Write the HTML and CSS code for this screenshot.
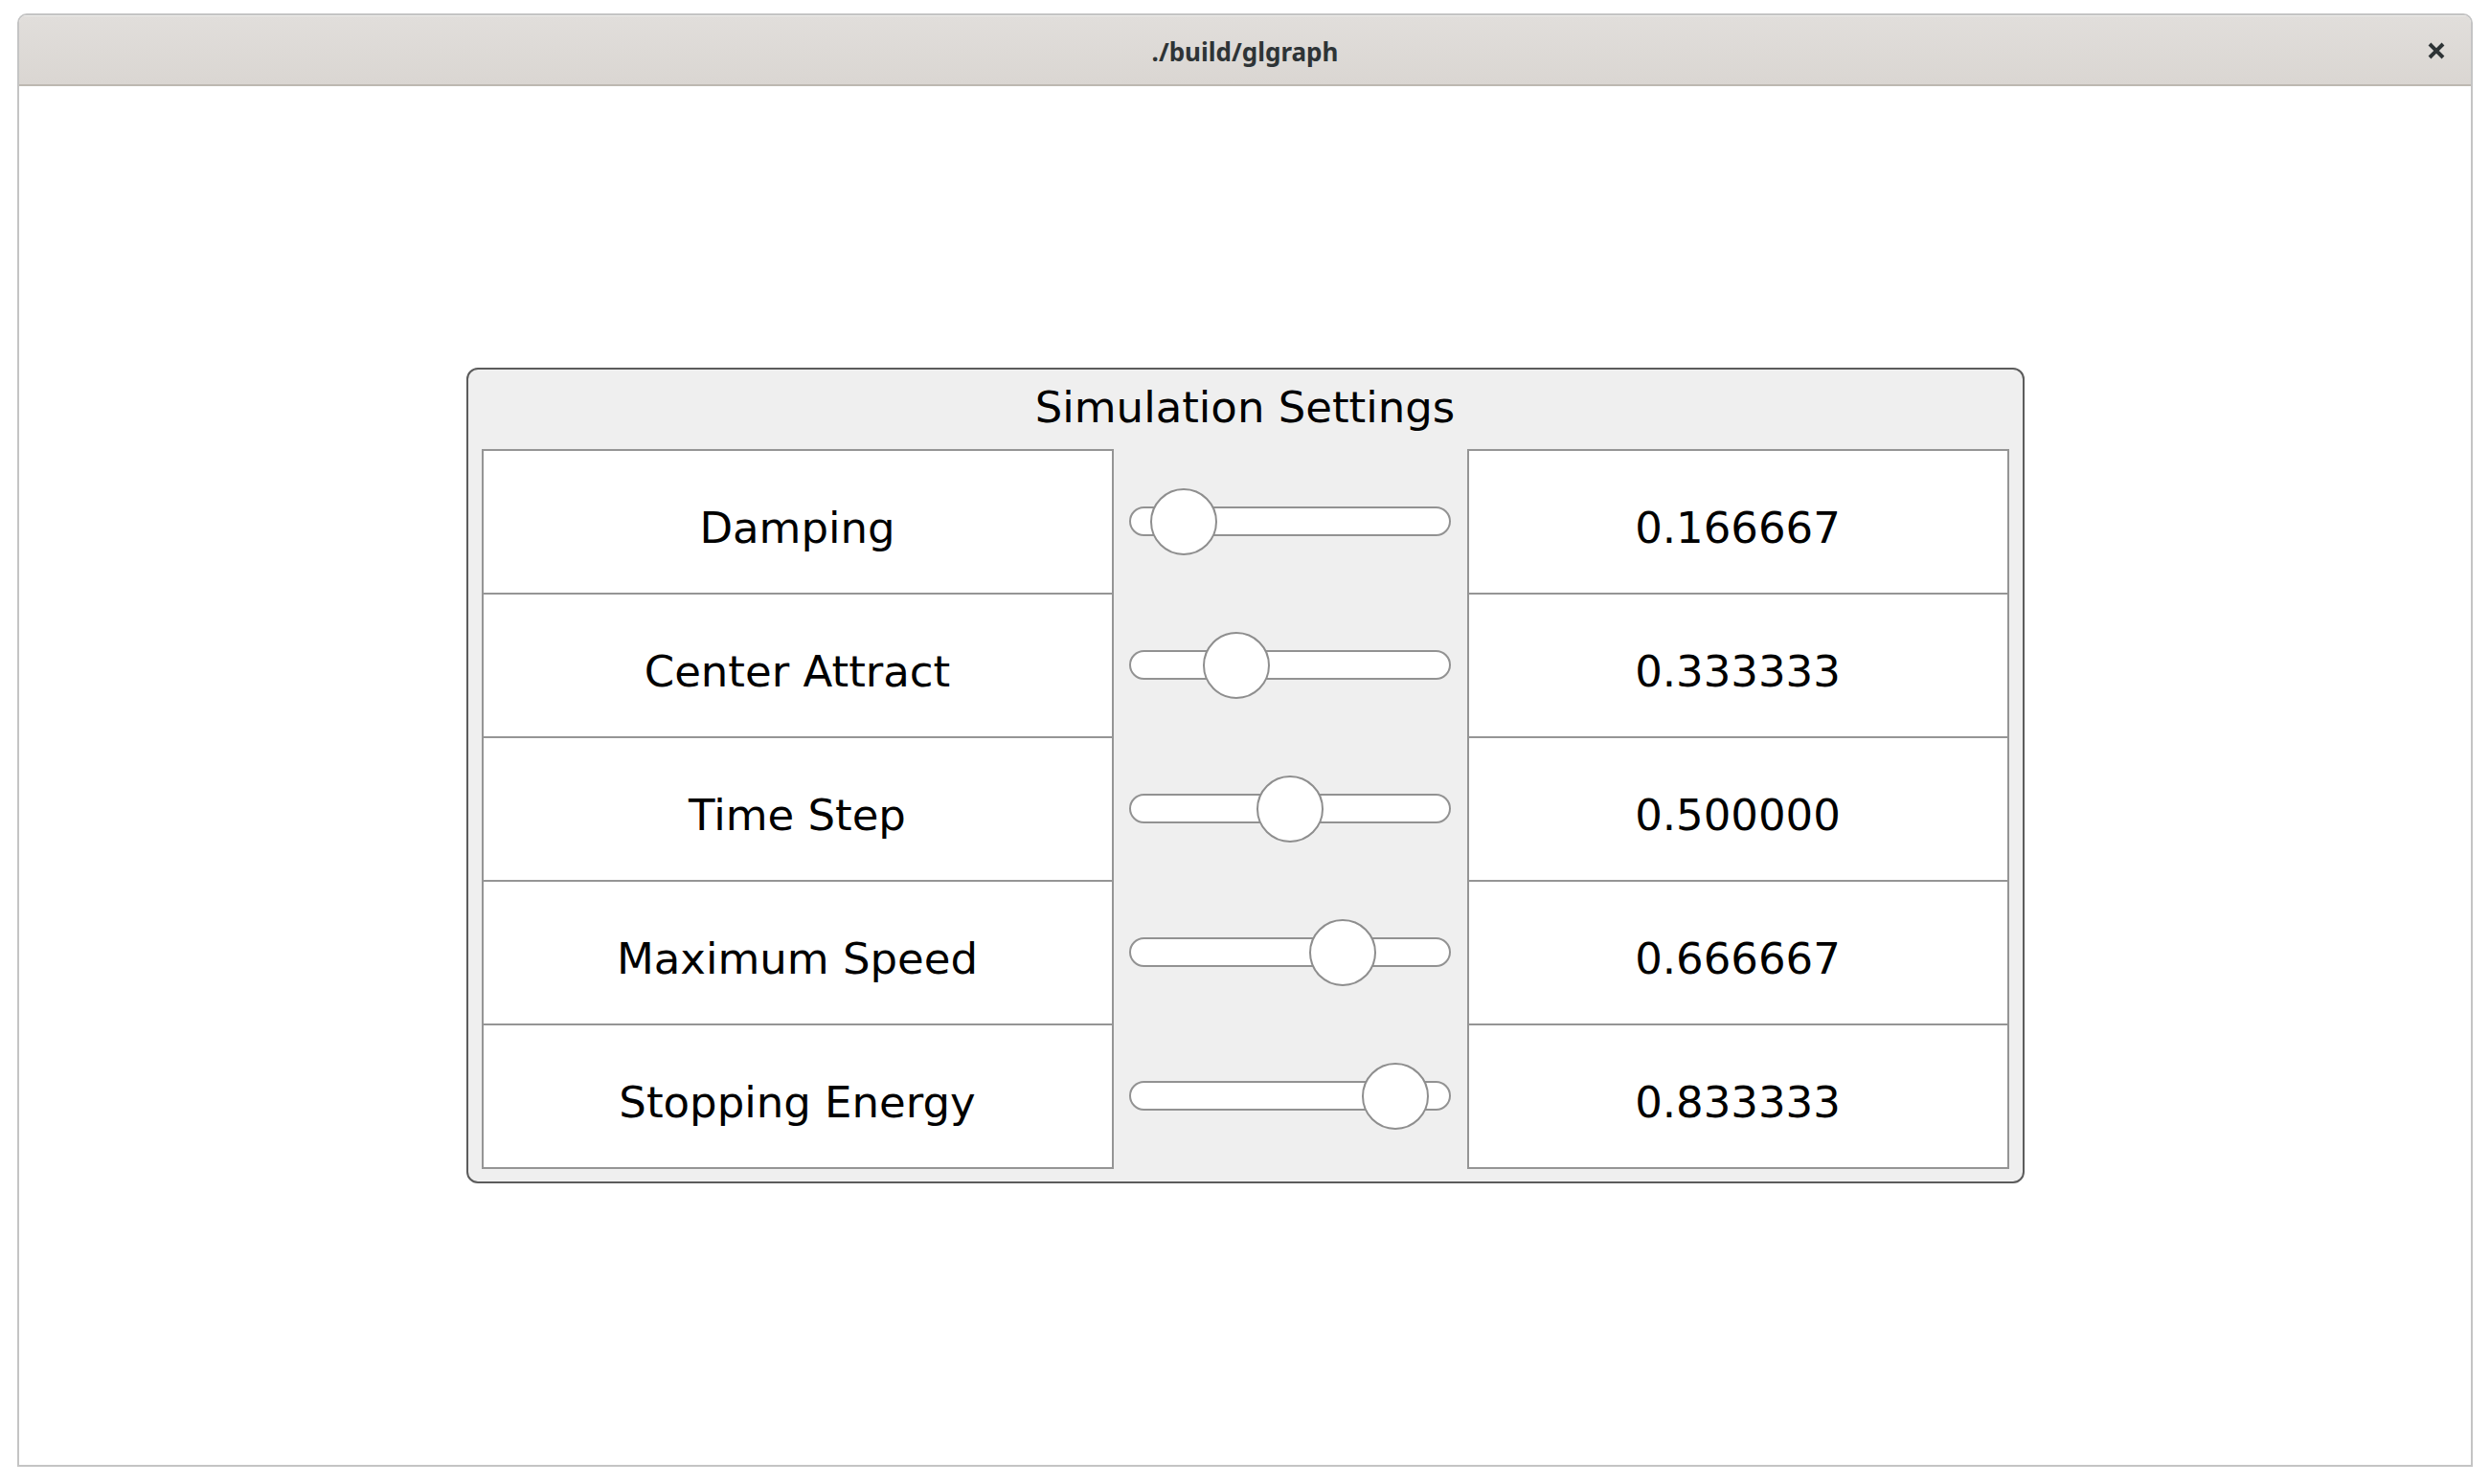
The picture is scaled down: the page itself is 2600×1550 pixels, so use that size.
FILE: index.html
```html
<!DOCTYPE html>
<html>
<head>
<meta charset="utf-8">
<title>./build/glgraph</title>
<link rel="stylesheet" href="styles.css">
</head>
<body>
<div class="screen">
  <div class="window">
    <div class="titlebar">
      <span class="title">./build/glgraph</span>
      <span class="close">
        <svg width="20" height="20" viewBox="0 0 20 20"><path d="M3 3 L17 17 M17 3 L3 17" stroke="#2e3436" stroke-width="4" stroke-linecap="butt" fill="none"/></svg>
      </span>
    </div>
    <div class="content">
      <div class="panel">
        <div class="panel-title">Simulation Settings</div>
        <div class="table">
          <div class="cell label first">Damping</div>
          <div class="slider-cell"><div class="track"><div class="knob" style="left:16.6667%"></div></div></div>
          <div class="cell value first">0.166667</div>

          <div class="cell label">Center Attract</div>
          <div class="slider-cell"><div class="track"><div class="knob" style="left:33.3333%"></div></div></div>
          <div class="cell value">0.333333</div>

          <div class="cell label">Time Step</div>
          <div class="slider-cell"><div class="track"><div class="knob" style="left:50%"></div></div></div>
          <div class="cell value">0.500000</div>

          <div class="cell label">Maximum Speed</div>
          <div class="slider-cell"><div class="track"><div class="knob" style="left:66.6667%"></div></div></div>
          <div class="cell value">0.666667</div>

          <div class="cell label last">Stopping Energy</div>
          <div class="slider-cell"><div class="track"><div class="knob" style="left:83.3333%"></div></div></div>
          <div class="cell value last">0.833333</div>
        </div>
      </div>
    </div>
  </div>
</div>
</body>
</html>
```

FILE: styles.css
```css
html, body {
  margin: 0;
  padding: 0;
  background: #ffffff;
}

.screen {
  width: 2600px;
  height: 1550px;
  box-sizing: border-box;
  padding: 14px 18px 18px 18px;
  display: flex;
}

.window {
  flex: 1;
  display: flex;
  flex-direction: column;
  border: 2px solid #c4c4c4;
  border-radius: 10px 10px 0 0;
  background: #ffffff;
  overflow: hidden;
}

.titlebar {
  position: relative;
  height: 72px;
  flex: 0 0 72px;
  background: linear-gradient(to bottom, #e1dedb, #dad6d2);
  border-bottom: 2px solid #bdb8b1;
  display: flex;
  align-items: center;
  justify-content: center;
  box-shadow: inset 0 1px 0 #ecebe9;
}

.title {
  font-family: "Noto Sans", "Open Sans", sans-serif;
  font-weight: bold;
  font-size: 26px;
  color: #2e3436;
  padding-top: 3px;
}

.close {
  position: absolute;
  right: 26px;
  top: 27px;
  width: 20px;
  height: 20px;
  display: flex;
}

.content {
  flex: 1;
  display: flex;
  align-items: center;
  justify-content: center;
}

.panel {
  width: 1627px;
  height: 852px;
  box-sizing: border-box;
  border: 2px solid #5c5c5c;
  border-radius: 12px;
  background: #efefef;
  padding: 0 14px 14px 14px;
  display: flex;
  flex-direction: column;
}

.panel-title {
  height: 83px;
  box-sizing: border-box;
  padding-top: 14px;
  text-align: center;
  font-family: "DejaVu Sans", sans-serif;
  font-size: 45px;
  line-height: 1.164;
  color: #000000;
}

.table {
  display: grid;
  grid-template-columns: 660px 369px 566px;
  grid-template-rows: repeat(5, 150px);
}

.cell {
  background: #ffffff;
  border-left: 2px solid #959595;
  border-right: 2px solid #959595;
  border-top: 2px solid #959595;
  display: flex;
  align-items: center;
  justify-content: center;
  box-sizing: border-box;
  padding-top: 12px;
  font-family: "DejaVu Sans", sans-serif;
  font-size: 45px;
  color: #000000;
}

.cell.last {
  height: 152px;
  border-bottom: 2px solid #959595;
}

.slider-cell {
  display: flex;
  align-items: center;
  padding: 1px 17px 0 16px;
  box-sizing: border-box;
}

.track {
  position: relative;
  flex: 1;
  height: 31px;
  box-sizing: border-box;
  border: 2px solid #929292;
  border-radius: 16px;
  background: #ffffff;
}

.knob {
  position: absolute;
  top: 50%;
  width: 70px;
  height: 70px;
  box-sizing: border-box;
  border: 2px solid #8e8e8e;
  border-radius: 50%;
  background: #ffffff;
  transform: translate(-50%, -50%);
}
```
